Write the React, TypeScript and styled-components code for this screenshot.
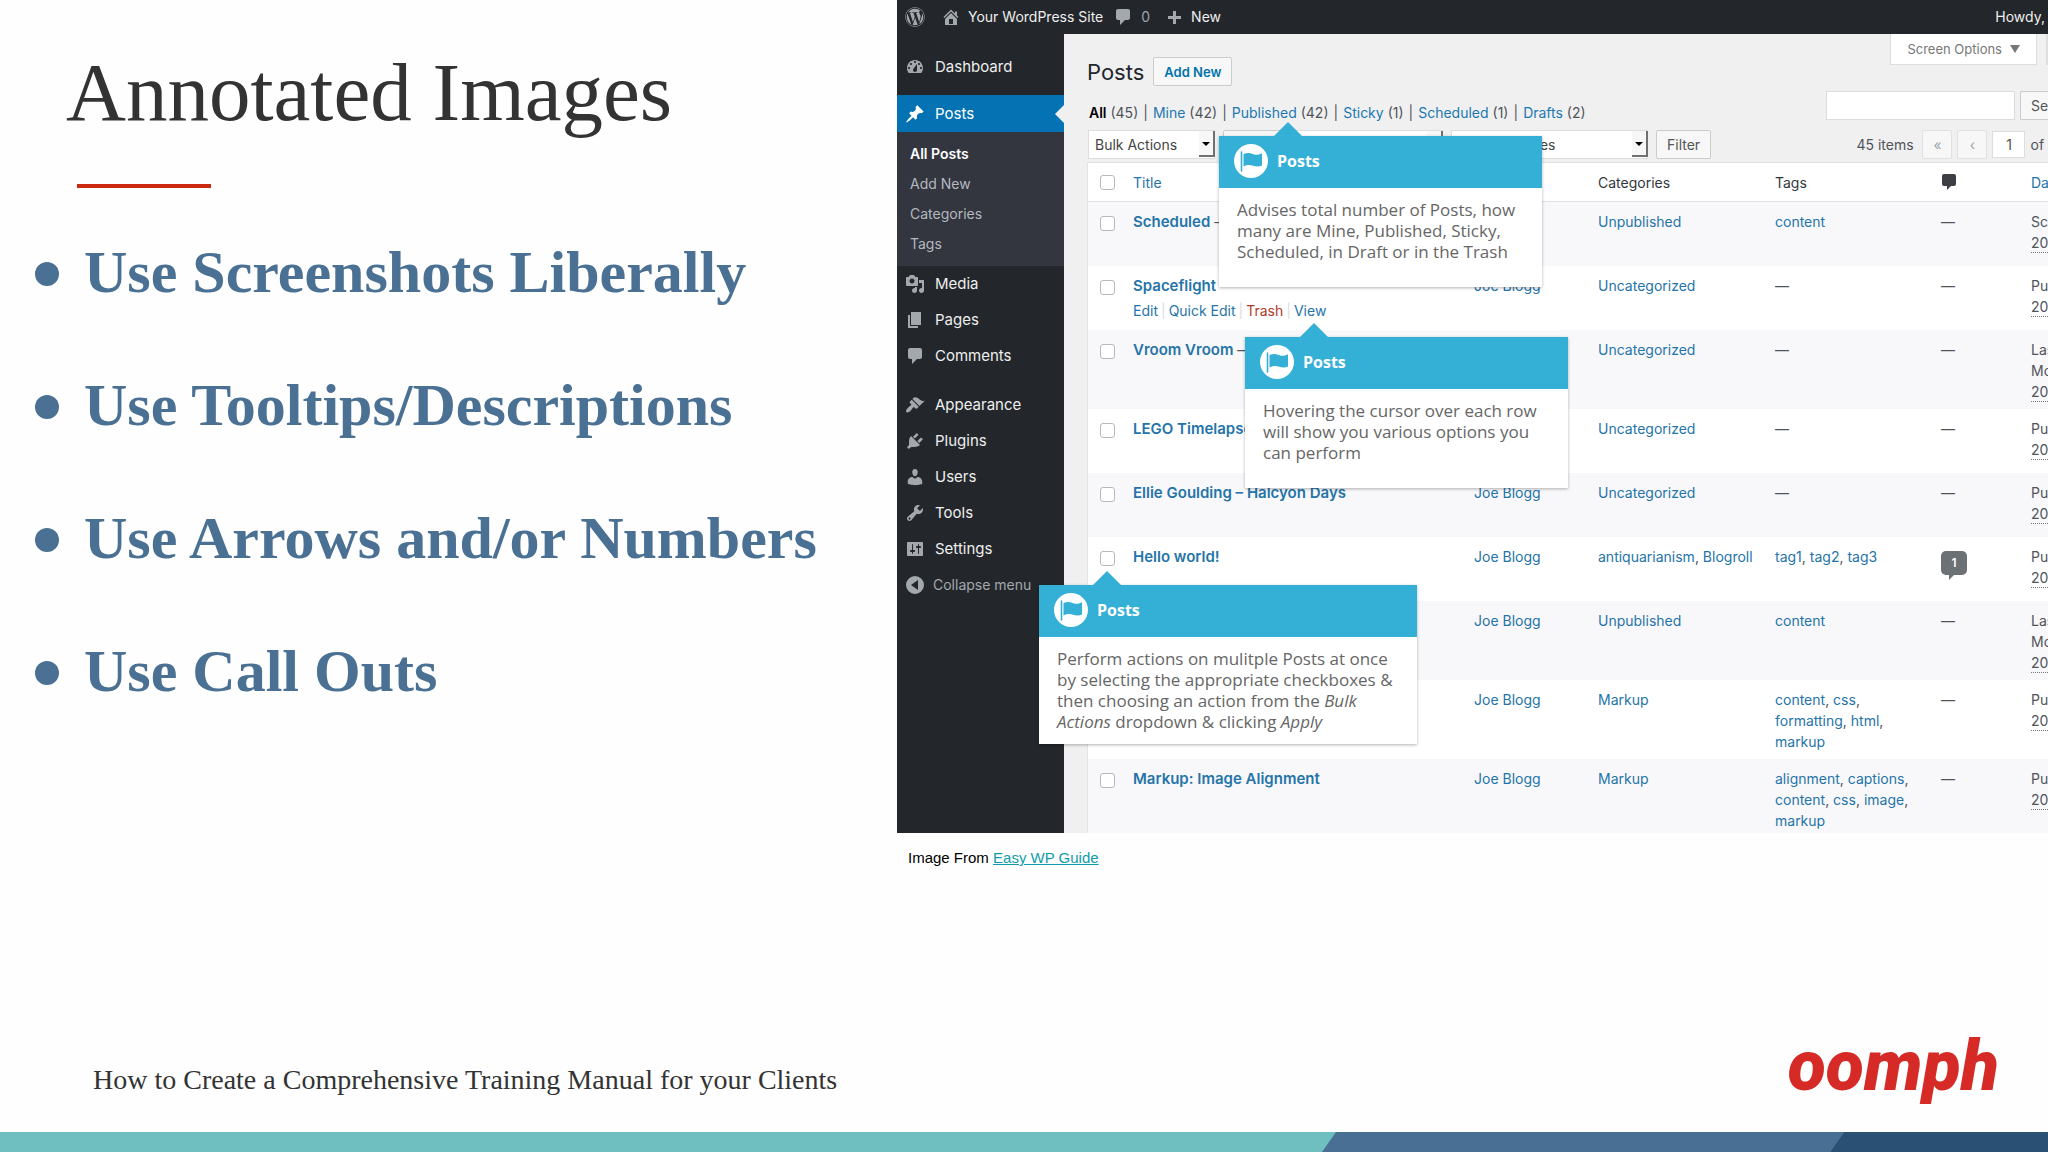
import React from "react";
import styled, { createGlobalStyle, css } from "styled-components";
import { FaWordpress } from "react-icons/fa";

const ui = `Inter, "Liberation Sans", sans-serif`;
const serif = `"Source Serif Pro", "Liberation Serif", serif`;

const Global = createGlobalStyle`
  *, *::before, *::after { box-sizing: border-box; }
  body { margin: 0; background: #fefefe; }
  a { color: inherit; text-decoration: none; }
  button, input, select { font: inherit; color: inherit; margin: 0; }
`;

/* ---------- slide ---------- */

const Slide = styled.div`
  min-height: 100vh;
  display: flex;
  flex-direction: column;
  overflow: hidden;
  font-family: ${serif};
`;

const Columns = styled.main`
  display: grid;
  grid-template-columns: minmax(0, 897fr) minmax(0, 1151fr);
`;

const Lesson = styled.section`
  padding: 44px 0 0 35px;
`;

const Title = styled.h1`
  margin: 0;
  padding-left: 31px;
  font-size: 83px;
  line-height: 96px;
  font-weight: 400;
  color: #333;
  white-space: nowrap;
`;

const Rule = styled.hr`
  width: 134px;
  height: 4px;
  margin: 44px 0 50px 42px;
  border: 0;
  background: #cb2a10;
`;

const Points = styled.ul`
  margin: 0;
  padding: 0;
  list-style: none;
  display: flex;
  flex-direction: column;
  gap: 65px;
`;

const Point = styled.li`
  display: flex;
  align-items: center;
  gap: 25px;
  font-size: 60px;
  line-height: 68px;
  font-weight: 700;
  color: #4a7093;
  white-space: nowrap;

  &::before {
    content: "";
    width: 24px;
    height: 24px;
    margin-top: 4px;
    border-radius: 50%;
    background: #4a7093;
  }
`;

const Caption = styled.figcaption`
  padding: 16px 0 0 11px;
  font: 15px/18px "Liberation Sans", Arial, sans-serif;
  color: #000;

  a {
    color: #0f9bab;
    text-decoration: underline;
  }
`;

const Footer = styled.footer`
  margin-top: auto;
`;

const FooterRow = styled.div`
  display: flex;
  justify-content: space-between;
  align-items: flex-end;
  padding: 0 49px 20px 93px;
`;

const Course = styled.p`
  margin: 0;
  padding-bottom: 14px;
  font-size: 28px;
  line-height: 36px;
  color: #333;
`;

const Logo = styled.span`
  font: italic 900 70px/92px Roboto, "Liberation Sans", sans-serif;
  color: #d62a27;
`;

const Band = styled.div`
  display: flex;
  height: 20px;
  overflow: hidden;
  background: #6fbfc0;
`;

const Stripe = styled.div<{ $share: number; $color: string }>`
  flex: ${(p) => p.$share} 0 0;
  background: ${(p) => p.$color};
  transform: skewX(-35deg);

  &:last-child {
    box-shadow: 20px 0 0 ${(p) => p.$color};
  }
`;

/* ---------- admin screen ---------- */

const Figure = styled.figure`
  margin: 0;
  min-width: 0;
`;

const Screen = styled.div`
  position: relative;
  overflow: hidden;
  font: 14px/20px ${ui};
  color: #50545a;
  background: #f0f0f1;
`;

const AdminBar = styled.header`
  display: flex;
  align-items: center;
  height: 34px;
  padding: 0 3px 0 8px;
  background: #23272b;
  color: #eee;
  font-size: 14px;
`;

const BarLink = styled.a<{ $left: number; $gap: number; $dim?: boolean }>`
  display: flex;
  align-items: center;
  gap: ${(p) => p.$gap}px;
  margin-left: ${(p) => p.$left}px;
  color: ${(p) => (p.$dim ? "#9ea3a8" : "#eee")};

  svg { color: #a3a8ad; }
`;

const Howdy = styled.span`
  margin-left: auto;
`;

const Body = styled.div`
  display: flex;
`;

const Side = styled.nav`
  flex: 0 0 167px;
  padding-top: 15px;
  background: #23272b;
`;

const MenuItem = styled.a<{ $active?: boolean; $gap?: number; $dim?: boolean }>`
  position: relative;
  display: flex;
  align-items: center;
  gap: 10px;
  height: 36px;
  margin-top: ${(p) => p.$gap ?? 0}px;
  padding-left: 8px;
  font-size: 15px;
  color: #eee;

  svg { color: #a3a8ad; }

  ${(p) =>
    p.$dim &&
    css`
      gap: 8px;
      font-size: 14px;
      color: #a3a8ad;
    `}

  ${(p) =>
    p.$active &&
    css`
      height: 37px;
      color: #fff;
      background: #0472b3;

      svg { color: #fff; }

      &::after {
        content: "";
        position: absolute;
        right: 0;
        border: 9px solid transparent;
        border-left-width: 0;
        border-right-color: #f0f0f1;
      }
    `}
`;

const SubMenu = styled.div`
  display: flex;
  flex-direction: column;
  padding: 7px 0 7px 13px;
  background: #33353f;
  font-size: 14px;
  line-height: 30px;
  color: #b4b9be;
`;

const Current = styled.a`
  font-weight: 600;
  color: #fff;
`;

const Content = styled.section`
  flex: 1;
  min-width: 0;
  padding-left: 23px;
`;

const TopRow = styled.div`
  display: flex;
  justify-content: space-between;
  align-items: flex-start;
`;

const Heading = styled.div`
  display: flex;
  align-items: center;
  gap: 9px;
  padding-top: 23px;

  h2 {
    margin: 0;
    font-size: 22px;
    line-height: 28px;
    font-weight: 400;
    color: #23272b;
  }
`;

const Button = styled.button<{ $link?: boolean; $quiet?: boolean; $wide?: number }>`
  height: 29px;
  padding: 0 10px;
  ${(p) => p.$wide && `width: ${p.$wide}px; padding: 0;`}
  border: 1px solid ${(p) => (p.$quiet ? "#e0e0e2" : "#ccc")};
  border-radius: 2px;
  background: #f7f7f7;
  font-size: 14px;
  line-height: 26px;
  white-space: nowrap;
  color: ${(p) => (p.$quiet ? "#a0a5aa" : "#555")};
  ${(p) => p.$link && "font-size: 13px; font-weight: 600; color: #0073aa;"}
`;

const Tabs = styled.div`
  display: flex;
  gap: 9px;
`;

const Tab = styled.button`
  display: flex;
  align-items: center;
  gap: 8px;
  height: 31px;
  padding: 0 16px;
  border: 1px solid #ddd;
  border-top: 0;
  background: #fff;
  font-size: 13px;
  color: #777;
  white-space: nowrap;

  &:last-child { width: 1px; padding: 0; }
`;

const ViewRow = styled.div`
  display: flex;
  justify-content: space-between;
  margin-top: 5px;
`;

const Views = styled.div`
  display: flex;
  align-items: flex-end;
  gap: 5px;
  padding: 12px 0 0 2px;
  font-size: 14px;
  white-space: nowrap;

  a { color: #2078b0; }
  b { color: #000; font-weight: 600; }
`;

const Tools = styled.div<{ $gap: number }>`
  display: flex;
  align-items: center;
  gap: ${(p) => p.$gap}px;
  white-space: nowrap;
`;

const Clipped = styled(Tools)`
  align-items: flex-start;
  overflow: hidden;

  button { border-right: 0; border-radius: 2px 0 0 2px; padding-right: 0; text-align: left; width: 28px; }
`;

const SearchBox = styled.input`
  width: 189px;
  height: 29px;
  padding: 0 8px;
  border: 1px solid #ddd;
  background: #fff;
`;

const PageBox = styled.input`
  width: 33px;
  height: 27px;
  border: 1px solid #ddd;
  background: #fff;
  text-align: center;
`;

const NavRow = styled.div`
  display: flex;
  justify-content: space-between;
  margin: 7px 0 3px;
  padding-left: 1px;
`;

const SelectWrap = styled.div<{ $width: number; $indent?: number }>`
  position: relative;
  width: ${(p) => p.$width}px;

  select {
    display: block;
    width: 100%;
    height: 29px;
    padding: 0 6px 0 ${(p) => p.$indent ?? 6}px;
    border: 1px solid #ddd;
    border-radius: 0;
    appearance: none;
    background: #fff;
    font-size: 14px;
    color: #444;
  }
  &::before {
    content: "";
    position: absolute;
    right: 0;
    top: 1px;
    width: 16px;
    height: 26px;
    border: solid #707070;
    border-width: 0 2px 2px 0;
    background: #f7f7f7;
    pointer-events: none;
  }
  &::after {
    content: "";
    position: absolute;
    right: 5px;
    top: 12px;
    border: 4px solid transparent;
    border-top-color: #000;
    border-bottom: 0;
    pointer-events: none;
  }
`;

const Table = styled.table`
  width: 100%;
  table-layout: fixed;
  border-collapse: separate;
  border-spacing: 0;
  border-left: 1px solid #e4e4e6;
  background: #fff;
  font-size: 14px;
  line-height: 21px;

  th {
    height: 40px;
    padding: 0;
    border: solid #e1e1e3;
    border-width: 1px 0;
    font-weight: 400;
    text-align: left;
    color: #32373c;
  }
  th a, td a { color: #2574a9; }
  td {
    height: 64px;
    padding: 9px 0 7px;
    vertical-align: top;
  }
  tbody tr:nth-child(odd) { background: #f8f8fa; }
  tbody tr:last-child td { padding-bottom: 2px; }
`;

const Col = styled.col<{ $width?: number }>`
  width: ${(p) => (p.$width ? `${p.$width}px` : "auto")};
`;

const Check = styled.input`
  display: block;
  appearance: none;
  width: 15px;
  height: 15px;
  margin: 5px 0 0 12px !important;
  border: 1px solid #b4b9be;
  border-radius: 3px;
  background: #fff;

  th & { margin-top: 1px !important; }
`;

const RowTitle = styled.a`
  font-size: 15px;
  font-weight: 600;
`;

const Actions = styled.div`
  display: flex;
  gap: 3px;
  padding-top: 4px;
  color: #ddd;
`;

const Trash = styled.a`
  && { color: #b03a2a; }
`;

const TagCell = styled.td`
  && { padding-right: 22px; }
`;

const DateCell = styled.td`
  overflow: hidden;
  white-space: nowrap;

  abbr {
    display: inline-block;
    line-height: 19px;
    border-bottom: 1px dotted #777;
    text-decoration: none;
  }
`;

const Count = styled.span`
  position: relative;
  display: block;
  width: 26px;
  height: 24px;
  margin-top: 5px;
  border-radius: 5px;
  background: #6c7175;
  color: #fff;
  font-size: 12px;
  font-weight: 600;
  line-height: 24px;
  text-align: center;

  &::after {
    content: "";
    position: absolute;
    left: 8px;
    top: 24px;
    border: solid transparent;
    border-width: 5px 5px 0 0;
    border-top-color: #6c7175;
  }
`;

/* ---------- call outs ---------- */

const Tip = styled.aside<{ $left: number; $top: number; $width: number; $arrow: number }>`
  position: absolute;
  left: ${(p) => p.$left}px;
  top: ${(p) => p.$top}px;
  width: ${(p) => p.$width}px;
  background: #fff;
  box-shadow: 0 1px 3px rgba(0, 0, 0, 0.3);
  font-family: "Open Sans", "Noto Sans", sans-serif;

  &::before {
    content: "";
    position: absolute;
    left: ${(p) => p.$arrow}px;
    top: -14px;
    border: solid transparent;
    border-width: 0 14px 14px;
    border-bottom-color: #34b0d7;
  }
`;

const TipHead = styled.h3`
  display: flex;
  align-items: center;
  gap: 9px;
  height: 52px;
  margin: 0;
  padding: 0 0 2px 15px;
  background: #34b0d7;
  color: #fff;
  font-size: 16px;
  font-weight: 700;
`;

const TipText = styled.p<{ $roomy?: boolean }>`
  margin: 0;
  padding: 11px 18px ${(p) => (p.$roomy ? 25 : 12)}px;
  font-size: 17px;
  line-height: 21px;
  color: #666;
`;

const paths = {
  home: "M16 8.5l1.53 1.53-1.06 1.06L10 4.6l-6.47 6.49-1.06-1.06L10 2.5l4 4v-2h2v4zm-6-2.46l6 5.99V18H4v-5.97zM12 17v-5H8v5h4z",
  plus: "M17 9v3h-5v5H9v-5H4V9h5V4h3v5h5z",
  dashboard:
    "M3.76 16h12.48c1.1-1.37 1.76-3.11 1.76-5 0-4.42-3.58-8-8-8s-8 3.58-8 8c0 1.89.66 3.63 1.76 5zM10 4c.55 0 1 .45 1 1s-.45 1-1 1-1-.45-1-1 .45-1 1-1zM6 6c.55 0 1 .45 1 1s-.45 1-1 1-1-.45-1-1 .45-1 1-1zm8 0c.55 0 1 .45 1 1s-.45 1-1 1-1-.45-1-1 .45-1 1-1zm-5.37 5.55L12 7v6c0 1.1-.9 2-2 2s-2-.9-2-2c0-.57.24-1.08.63-1.45zM4 10c.55 0 1 .45 1 1s-.45 1-1 1-1-.45-1-1 .45-1 1-1zm12 0c.55 0 1 .45 1 1s-.45 1-1 1-1-.45-1-1 .45-1 1-1z",
  pin: "M10.44 3.02l1.82-1.82 6.36 6.35-1.83 1.82c-1.05-.68-2.48-.57-3.41.36l-.75.75c-.92.93-1.04 2.35-.35 3.41l-1.83 1.82-2.41-2.41-2.8 2.79c-.42.42-3.38 2.71-3.8 2.29s1.86-3.39 2.28-3.81l2.79-2.79L4.1 9.36l1.83-1.82c1.05.69 2.48.57 3.4-.36l.75-.75c.93-.92 1.05-2.35.36-3.41z",
  media:
    "M13 11V4c0-.55-.45-1-1-1h-1.67L9 1H5L3.67 3H2c-.55 0-1 .45-1 1v7c0 .55.45 1 1 1h10c.55 0 1-.45 1-1zM7 4.5c1.38 0 2.5 1.12 2.5 2.5S8.38 9.5 7 9.5 4.5 8.38 4.5 7 5.62 4.5 7 4.5zM14 6h5v10.5c0 1.38-1.12 2.5-2.5 2.5S14 17.88 14 16.5s1.12-2.5 2.5-2.5c.17 0 .34.02.5.05V9h-3V6zm-4 8.05V13h2v3.5c0 1.38-1.12 2.5-2.5 2.5S7 17.88 7 16.5 8.12 14 9.5 14c.17 0 .34.02.5.05z",
  pages: "M6 15V2h10v13H6zm-1 1h8v2H3V5h2v11z",
  comment: "M5 2h10c1.1 0 2 .9 2 2v7c0 1.1-.9 2-2 2h-3l-5 5v-5H5c-1.1 0-2-.9-2-2V4c0-1.1.9-2 2-2z",
  appearance:
    "M14.48 11.06L7.41 3.99l1.5-1.5c.5-.56 2.3-.47 3.51.32 1.21.8 1.43 1.28 2.91 2.1 1.18.64 2.45 1.26 4.45.85zm-.71.71L6.7 4.7 4.93 6.47c-.39.39-.39 1.02 0 1.41l1.06 1.06c.39.39.39 1.03 0 1.42-.6.6-1.43 1.11-2.21 1.69-.35.26-.7.53-1.01.84C1.43 14.23.4 16.08 1.4 17.07c.99 1 2.84-.03 4.18-1.36.31-.31.58-.66.85-1.02.57-.78 1.08-1.61 1.69-2.21.39-.39 1.02-.39 1.41 0l1.06 1.06c.39.39 1.02.39 1.41 0z",
  plugins:
    "M13.11 4.36L9.87 7.6 8 5.73l3.24-3.24c.35-.34 1.05-.2 1.56.32.52.51.66 1.21.31 1.55zm-8 1.77l.91-1.12 9.01 9.01-1.19.84c-.71.71-2.63 1.16-3.82 1.16H6.14L4.9 17.26c-.59.59-1.54.59-2.12 0-.59-.58-.59-1.53 0-2.12l1.24-1.24v-3.88c0-1.13.4-3.19 1.09-3.89zm7.26 3.97l3.24-3.24c.34-.35 1.04-.21 1.55.31.52.51.66 1.21.31 1.55l-3.24 3.25z",
  users:
    "M10 9.25c-2.27 0-2.73-3.44-2.73-3.44C7 4.02 7.82 2 9.97 2c2.16 0 2.98 2.02 2.71 3.81 0 0-.41 3.44-2.68 3.44zm0 2.57L12.72 10c2.39 0 4.52 2.33 4.52 4.53v2.49s-3.65 1.13-7.24 1.13c-3.65 0-7.24-1.13-7.24-1.13v-2.49c0-2.25 1.94-4.48 4.47-4.48z",
  tools:
    "M16.68 9.77c-1.34 1.34-3.3 1.67-4.95.99l-5.41 6.52c-.99.99-2.59.99-3.58 0s-.99-2.59 0-3.57l6.52-5.42c-.68-1.65-.35-3.61.99-4.95 1.28-1.28 3.12-1.62 4.72-1.06l-2.89 2.89 2.82 2.82 2.86-2.87c.53 1.58.18 3.39-1.08 4.65zM3.81 16.21c.4.39 1.04.39 1.43 0 .4-.4.4-1.04 0-1.43-.39-.4-1.03-.4-1.43 0-.39.39-.39 1.03 0 1.43z",
  settings:
    "M18 16V4c0-.55-.45-1-1-1H3c-.55 0-1 .45-1 1v12c0 .55.45 1 1 1h14c.55 0 1-.45 1-1zM8 11h1c.55 0 1 .45 1 1s-.45 1-1 1H8v1.5c0 .28-.22.5-.5.5s-.5-.22-.5-.5V13H6c-.55 0-1-.45-1-1s.45-1 1-1h1V5.5c0-.28.22-.5.5-.5s.5.22.5.5V11zm5-2h-1c-.55 0-1-.45-1-1s.45-1 1-1h1V5.5c0-.28.22-.5.5-.5s.5.22.5.5V7h1c.55 0 1 .45 1 1s-.45 1-1 1h-1v5.5c0 .28-.22.5-.5.5s-.5-.22-.5-.5V9z",
  collapse: "M10 1a9 9 0 1 0 0 18a9 9 0 1 0 0-18zM13 5v10L6 10z",
};

const Icon = ({ name, size = 20 }: { name: keyof typeof paths; size?: number }) => (
  <svg width={size} height={size} viewBox="0 0 20 20" aria-hidden="true">
    <path d={paths[name]} fill="currentColor" fillRule="evenodd" />
  </svg>
);

const FlagIcon = () => (
  <svg width="34" height="34" viewBox="0 0 34 34" aria-hidden="true">
    <circle cx="17" cy="17" r="17" fill="#fff" />
    <path d="M7.5 8v19" stroke="#34b0d7" strokeWidth="1.6" strokeLinecap="round" />
    <path
      d="M9.500 10c4-1.500 6.500-1.200 9 0s5.500 1.200 9.500-.8v12.300c-3 1.500-6.500 1.200-9 .2s-5.500-1.200-9.500.8z"
      fill="#34b0d7"
    />
  </svg>
);

type Row = {
  title?: string;
  tail?: string;
  actions?: boolean;
  author?: boolean;
  cats: string[];
  tags: string[];
  count?: number;
  date: string[];
};

const rows: Row[] = [
  { title: "Scheduled", tail: " –", cats: ["Unpublished"], tags: ["content"], date: ["Sc"] },
  { title: "Spaceflight", actions: true, author: true, cats: ["Uncategorized"], tags: [], date: ["Pu"] },
  { title: "Vroom Vroom", tail: " —", cats: ["Uncategorized"], tags: [], date: ["Las", "Mo"] },
  { title: "LEGO Timelapse", cats: ["Uncategorized"], tags: [], date: ["Pu"] },
  { title: "Ellie Goulding – Halcyon Days", author: true, cats: ["Uncategorized"], tags: [], date: ["Pu"] },
  {
    title: "Hello world!",
    author: true,
    cats: ["antiquarianism", "Blogroll"],
    tags: ["tag1", "tag2", "tag3"],
    count: 1,
    date: ["Pu"],
  },
  { author: true, cats: ["Unpublished"], tags: ["content"], date: ["Las", "Mo"] },
  { author: true, cats: ["Markup"], tags: ["content", "css", "formatting", "html", "markup"], date: ["Pu"] },
  {
    title: "Markup: Image Alignment",
    author: true,
    cats: ["Markup"],
    tags: ["alignment", "captions", "content", "css", "image", "markup"],
    date: ["Pu"],
  },
];

const Links = ({ items }: { items: string[] }) => (
  <>
    {items.length === 0 && "—"}
    {items.map((t, i) => (
      <React.Fragment key={t}>
        {i > 0 && ", "}
        <a href="#">{t}</a>
      </React.Fragment>
    ))}
  </>
);

const views: [string, number][] = [
  ["All", 45],
  ["Mine", 42],
  ["Published", 42],
  ["Sticky", 1],
  ["Scheduled", 1],
  ["Drafts", 2],
];

const Callout = (p: {
  left: number;
  top: number;
  width: number;
  arrow: number;
  roomy?: boolean;
  children: React.ReactNode;
}) => (
  <Tip $left={p.left} $top={p.top} $width={p.width} $arrow={p.arrow}>
    <TipHead>
      <FlagIcon />
      Posts
    </TipHead>
    <TipText $roomy={p.roomy}>{p.children}</TipText>
  </Tip>
);

export default function App() {
  return (
    <Slide>
      <Global />
      <Columns>
        <Lesson>
          <Title>Annotated Images</Title>
          <Rule />
          <Points>
            <Point>Use Screenshots Liberally</Point>
            <Point>Use Tooltips/Descriptions</Point>
            <Point>Use Arrows and/or Numbers</Point>
            <Point>Use Call Outs</Point>
          </Points>
        </Lesson>

        <Figure>
          <Screen>
            <AdminBar>
              <BarLink href="#" $left={0} $gap={0} aria-label="WordPress">
                <FaWordpress size={20} />
              </BarLink>
              <BarLink href="#" $left={16} $gap={7}>
                <Icon name="home" />
                Your WordPress Site
              </BarLink>
              <BarLink href="#" $left={10} $gap={8} $dim>
                <Icon name="comment" />0
              </BarLink>
              <BarLink href="#" $left={14} $gap={7}>
                <Icon name="plus" />
                New
              </BarLink>
              <Howdy>Howdy,</Howdy>
            </AdminBar>

            <Body>
              <Side>
                <MenuItem href="#"><Icon name="dashboard" />Dashboard</MenuItem>
                <MenuItem href="#" $active $gap={10}><Icon name="pin" />Posts</MenuItem>
                <SubMenu>
                  <Current href="#">All Posts</Current>
                  <a href="#">Add New</a>
                  <a href="#">Categories</a>
                  <a href="#">Tags</a>
                </SubMenu>
                <MenuItem href="#"><Icon name="media" />Media</MenuItem>
                <MenuItem href="#"><Icon name="pages" />Pages</MenuItem>
                <MenuItem href="#"><Icon name="comment" />Comments</MenuItem>
                <MenuItem href="#" $gap={13}><Icon name="appearance" />Appearance</MenuItem>
                <MenuItem href="#"><Icon name="plugins" />Plugins</MenuItem>
                <MenuItem href="#"><Icon name="users" />Users</MenuItem>
                <MenuItem href="#"><Icon name="tools" />Tools</MenuItem>
                <MenuItem href="#"><Icon name="settings" />Settings</MenuItem>
                <MenuItem href="#" $dim><Icon name="collapse" />Collapse menu</MenuItem>
              </Side>

              <Content>
                <TopRow>
                  <Heading>
                    <h2>Posts</h2>
                    <Button $link>Add New</Button>
                  </Heading>
                  <Tabs>
                    <Tab>
                      Screen Options
                      <svg width="10" height="8" viewBox="0 0 10 8" aria-hidden="true">
                        <path d="M0 0h10L5 8z" fill="#777" />
                      </svg>
                    </Tab>
                    <Tab aria-label="Help" />
                  </Tabs>
                </TopRow>

                <ViewRow>
                  <Views>
                    {views.map(([name, n], i) => (
                      <React.Fragment key={name}>
                        {i > 0 && <span>|</span>}
                        <span>
                          {i === 0 ? <b>{name}</b> : <a href="#">{name}</a>} ({n})
                        </span>
                      </React.Fragment>
                    ))}
                  </Views>
                  <Clipped $gap={5}>
                    <SearchBox aria-label="Search posts" />
                    <Button>Se</Button>
                  </Clipped>
                </ViewRow>

                <NavRow>
                  <Tools $gap={8}>
                    <SelectWrap $width={127}>
                      <select aria-label="Bulk actions"><option>Bulk Actions</option></select>
                    </SelectWrap>
                    <Button $wide={58} aria-label="Apply" />
                    <SelectWrap $width={154}>
                      <select aria-label="Filter by date"><option /></select>
                    </SelectWrap>
                    <SelectWrap $width={197} $indent={11}>
                      <select aria-label="Filter by category"><option>All Categories</option></select>
                    </SelectWrap>
                    <Button>Filter</Button>
                  </Tools>
                  <Tools $gap={5}>
                    <span>45 items&nbsp;</span>
                    <Button $quiet $wide={30}>«</Button>
                    <Button $quiet $wide={30}>‹</Button>
                    <PageBox aria-label="Current page" defaultValue="1" />
                    <span>of&nbsp;</span>
                  </Tools>
                </NavRow>

                <Table>
                  <colgroup>
                    <Col $width={45} />
                    <Col />
                    <Col $width={124} />
                    <Col $width={177} />
                    <Col $width={166} />
                    <Col $width={90} />
                    <Col $width={17} />
                  </colgroup>
                  <thead>
                    <tr>
                      <th><Check type="checkbox" aria-label="Select all" /></th>
                      <th><a href="#">Title</a></th>
                      <th />
                      <th>Categories</th>
                      <th>Tags</th>
                      <th>
                        <svg width="16" height="18" viewBox="0 0 16 18" aria-label="Comments" display="block">
                          <path d="M3 1h10q2 0 2 2v8q0 2-2 2h-3l-4 4v-4H3q-2 0-2-2V3q0-2 2-2z" fill="#3c4044" />
                        </svg>
                      </th>
                      <th><a href="#">Da</a></th>
                    </tr>
                  </thead>
                  <tbody>
                    {rows.map((r, i) => (
                      <tr key={i}>
                        <td>{r.title && <Check type="checkbox" aria-label={`Select ${r.title}`} />}</td>
                        <td>
                          {r.title && <RowTitle href="#">{r.title}</RowTitle>}
                          {r.tail}
                          {r.actions && (
                            <Actions>
                              <a href="#">Edit</a>|<a href="#">Quick Edit</a>|<Trash href="#">Trash</Trash>|
                              <a href="#">View</a>
                            </Actions>
                          )}
                        </td>
                        <td>{r.author && <a href="#">Joe Blogg</a>}</td>
                        <td><Links items={r.cats} /></td>
                        <TagCell><Links items={r.tags} /></TagCell>
                        <td>{r.count ? <Count>{r.count}</Count> : "—"}</td>
                        <DateCell>
                          {r.date.map((d) => (
                            <div key={d}>{d}</div>
                          ))}
                          <abbr>20</abbr>
                        </DateCell>
                      </tr>
                    ))}
                  </tbody>
                </Table>
              </Content>
            </Body>

            <Callout left={322} top={136} width={323} arrow={55} roomy>
              Advises total number of Posts, how many are Mine, Published, Sticky, Scheduled, in Draft or in the Trash
            </Callout>
            <Callout left={348} top={337} width={323} arrow={55} roomy>
              Hovering the cursor over each row will show you various options you can perform
            </Callout>
            <Callout left={142} top={585} width={378} arrow={54}>
              Perform actions on mulitple Posts at once by selecting the appropriate checkboxes &amp; then choosing an
              action from the <em>Bulk Actions</em> dropdown &amp; clicking <em>Apply</em>
            </Callout>
          </Screen>
          <Caption>
            Image From <a href="#">Easy WP Guide</a>
          </Caption>
        </Figure>
      </Columns>

      <Footer>
        <FooterRow>
          <Course>How to Create a Comprehensive Training Manual for your Clients</Course>
          <Logo>oomph</Logo>
        </FooterRow>
        <Band>
          <Stripe $share={1329} $color="#6fbfc0" />
          <Stripe $share={508} $color="#4a6f94" />
          <Stripe $share={211} $color="#2a5074" />
        </Band>
      </Footer>
    </Slide>
  );
}
